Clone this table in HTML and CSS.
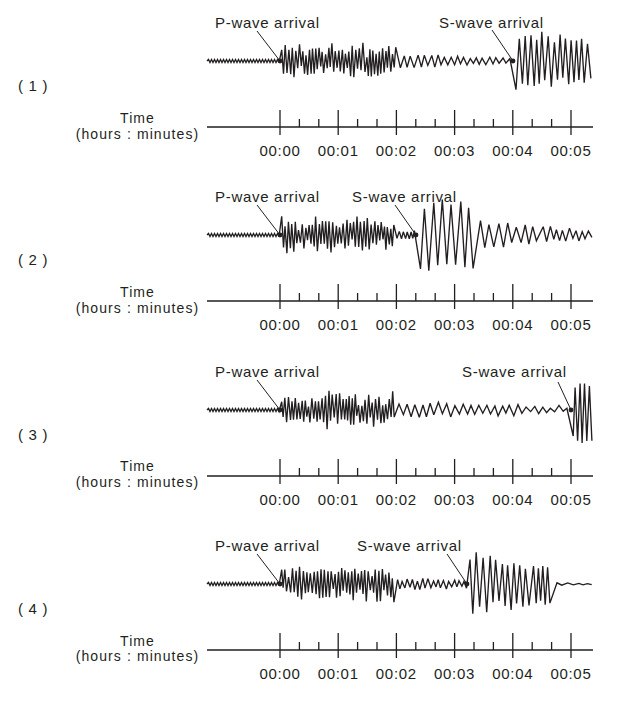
FILE: index.html
```html
<!DOCTYPE html>
<html lang="en">
<head>
<meta charset="utf-8">
<title>Seismograms</title>
<link rel="stylesheet" href="styles.css">
</head>
<body>
<main class="sheet">

  <section class="panel">
    <div class="side">
      <div class="num">( 1 )</div>
      <div class="axis-title"><span>Time</span><span>(hours : minutes)</span></div>
    </div>
    <div class="plot">
      <svg class="chart" width="400" height="142" viewBox="200 0 400 142">
        <path class="trace" data-trace="0" d=""/>
        <line class="leader" x1="257" y1="31" x2="280" y2="61"/>
        <line class="leader" x1="492" y1="30" x2="513" y2="61"/>
        <circle class="dot" cx="280" cy="61" r="2.4"/>
        <circle class="dot" cx="513" cy="61" r="2.4"/>
        <text class="note" x="215" y="27.5">P-wave arrival</text>
        <text class="note" x="439" y="27.5">S-wave arrival</text>
        <path class="axis" d="M207 127H593 M280 110V135 M338.2 110V135 M396.4 110V135 M454.6 110V135 M512.8 110V135 M571 110V135 M299.4 119V127 M318.8 119V127 M357.6 119V127 M377 119V127 M415.8 119V127 M435.2 119V127 M474 119V127 M493.4 119V127 M532.2 119V127 M551.6 119V127"/>
      </svg>
      <div class="ticks"><span>00:00</span><span>00:01</span><span>00:02</span><span>00:03</span><span>00:04</span><span>00:05</span></div>
    </div>
  </section>

  <section class="panel">
    <div class="side">
      <div class="num">( 2 )</div>
      <div class="axis-title"><span>Time</span><span>(hours : minutes)</span></div>
    </div>
    <div class="plot">
      <svg class="chart" width="400" height="142" viewBox="200 0 400 142">
        <path class="trace" data-trace="1" d=""/>
        <line class="leader" x1="257" y1="31" x2="280" y2="61"/>
        <line class="leader" x1="395" y1="31" x2="416" y2="61"/>
        <circle class="dot" cx="280" cy="61" r="2.4"/>
        <circle class="dot" cx="416" cy="61" r="2.4"/>
        <text class="note" x="215" y="27.5">P-wave arrival</text>
        <text class="note" x="352" y="27.5">S-wave arrival</text>
        <path class="axis" d="M207 127H593 M280 110V135 M338.2 110V135 M396.4 110V135 M454.6 110V135 M512.8 110V135 M571 110V135 M299.4 119V127 M318.8 119V127 M357.6 119V127 M377 119V127 M415.8 119V127 M435.2 119V127 M474 119V127 M493.4 119V127 M532.2 119V127 M551.6 119V127"/>
      </svg>
      <div class="ticks"><span>00:00</span><span>00:01</span><span>00:02</span><span>00:03</span><span>00:04</span><span>00:05</span></div>
    </div>
  </section>

  <section class="panel">
    <div class="side">
      <div class="num">( 3 )</div>
      <div class="axis-title"><span>Time</span><span>(hours : minutes)</span></div>
    </div>
    <div class="plot">
      <svg class="chart" width="400" height="142" viewBox="200 0 400 142">
        <path class="trace" data-trace="2" d=""/>
        <line class="leader" x1="257" y1="31" x2="280" y2="61"/>
        <line class="leader" x1="558" y1="33" x2="571" y2="61"/>
        <circle class="dot" cx="280" cy="61" r="2.4"/>
        <circle class="dot" cx="571" cy="61" r="2.4"/>
        <text class="note" x="215" y="27.5">P-wave arrival</text>
        <text class="note" x="462" y="27.5">S-wave arrival</text>
        <path class="axis" d="M207 127H593 M280 110V135 M338.2 110V135 M396.4 110V135 M454.6 110V135 M512.8 110V135 M571 110V135 M299.4 119V127 M318.8 119V127 M357.6 119V127 M377 119V127 M415.8 119V127 M435.2 119V127 M474 119V127 M493.4 119V127 M532.2 119V127 M551.6 119V127"/>
      </svg>
      <div class="ticks"><span>00:00</span><span>00:01</span><span>00:02</span><span>00:03</span><span>00:04</span><span>00:05</span></div>
    </div>
  </section>

  <section class="panel">
    <div class="side">
      <div class="num">( 4 )</div>
      <div class="axis-title"><span>Time</span><span>(hours : minutes)</span></div>
    </div>
    <div class="plot">
      <svg class="chart" width="400" height="142" viewBox="200 0 400 142">
        <path class="trace" data-trace="3" d=""/>
        <line class="leader" x1="257" y1="31" x2="280" y2="61"/>
        <line class="leader" x1="447" y1="31" x2="467" y2="61"/>
        <circle class="dot" cx="280" cy="61" r="2.4"/>
        <circle class="dot" cx="467" cy="61" r="2.4"/>
        <text class="note" x="215" y="27.5">P-wave arrival</text>
        <text class="note" x="357" y="27.5">S-wave arrival</text>
        <path class="axis" d="M207 127H593 M280 110V135 M338.2 110V135 M396.4 110V135 M454.6 110V135 M512.8 110V135 M571 110V135 M299.4 119V127 M318.8 119V127 M357.6 119V127 M377 119V127 M415.8 119V127 M435.2 119V127 M474 119V127 M493.4 119V127 M532.2 119V127 M551.6 119V127"/>
      </svg>
      <div class="ticks"><span>00:00</span><span>00:01</span><span>00:02</span><span>00:03</span><span>00:04</span><span>00:05</span></div>
    </div>
  </section>

</main>
<script src="script.js"></script>
</body>
</html>
```

FILE: styles.css
```css
html, body {
  margin: 0;
  background: #ffffff;
}

body {
  font-family: "Liberation Sans", Arial, sans-serif;
  font-size: 15px;
  letter-spacing: 0.7px;
  color: #231f20;
}

.sheet {
  width: 624px;
}

.panel {
  display: grid;
  grid-template-columns: 200px 400px;
  height: 174.33px;
}

.side {
  display: flex;
  flex-direction: column;
}

.num {
  padding-top: 77px;
  padding-left: 18px;
  line-height: 17px;
}

.axis-title {
  margin-top: 16.8px;
  margin-left: 75px;
  width: 125px;
  display: flex;
  flex-direction: column;
  align-items: center;
  font-size: 14px;
  letter-spacing: 1.1px;
  line-height: 15.7px;
}

.chart {
  display: block;
  overflow: visible;
}

.trace {
  fill: none;
  stroke: #231f20;
  stroke-width: 1.35;
  stroke-linejoin: miter;
  stroke-miterlimit: 3;
}

.leader {
  stroke: #231f20;
  stroke-width: 1;
}

.dot {
  fill: #231f20;
}

.note {
  font-family: "Liberation Sans", Arial, sans-serif;
  font-size: 15px;
  letter-spacing: 0.7px;
  fill: #231f20;
}

.axis {
  fill: none;
  stroke: #231f20;
  stroke-width: 1.3;
}

.ticks {
  display: flex;
  margin-left: 50.9px;
  line-height: 17px;
}

.ticks span {
  flex: none;
  width: 58.2px;
  text-align: center;
}
```

FILE: script.js
```js
(function () {
  function rng(seed) {
    return function () {
      seed |= 0;
      seed = (seed + 0x6D2B79F5) | 0;
      var t = Math.imul(seed ^ (seed >>> 15), 1 | seed);
      t = (t + Math.imul(t ^ (t >>> 7), 61 | t)) ^ t;
      return ((t ^ (t >>> 14)) >>> 0) / 4294967296;
    };
  }

  var CY = 61;
  var TRACES = [
    { seed: 11, segs: [
      { from: 280, to: 397, dx: 1.7, a0: 17, a1: 16, j: 0.65, drift: 3 },
      { from: 397, to: 513, dx: 3.4, a0: 8, a1: 3, j: 0.45, drift: 1 },
      { from: 513, to: 594, dx: 3, a0: 31, a1: 21, j: 0.3, drift: 2.5 }
    ]},
    { seed: 23, segs: [
      { from: 280, to: 395, dx: 1.7, a0: 17, a1: 16, j: 0.65, drift: 3 },
      { from: 395, to: 416, dx: 2, a0: 4, a1: 4, j: 0.3, drift: 0.5 },
      { from: 416, to: 476, dx: 4.5, a0: 38, a1: 34, j: 0.25, drift: 4 },
      { from: 476, to: 540, dx: 4.5, a0: 14, a1: 9, j: 0.4, drift: 2 },
      { from: 540, to: 594, dx: 3.2, a0: 9, a1: 5, j: 0.5, drift: 1.5 }
    ]},
    { seed: 37, segs: [
      { from: 280, to: 395, dx: 1.7, a0: 17, a1: 16, j: 0.65, drift: 3 },
      { from: 395, to: 571, dx: 4, a0: 8, a1: 4, j: 0.45, drift: 1.5 },
      { from: 571, to: 594, dx: 2.2, a0: 34, a1: 30, j: 0.3, drift: 3 }
    ]},
    { seed: 53, segs: [
      { from: 280, to: 395, dx: 1.7, a0: 17, a1: 16, j: 0.65, drift: 3 },
      { from: 395, to: 467, dx: 2.6, a0: 6, a1: 4, j: 0.45, drift: 1 },
      { from: 467, to: 531, dx: 3, a0: 33, a1: 20, j: 0.3, drift: 3 },
      { from: 531, to: 552, dx: 2.5, a0: 22, a1: 20, j: 0.3, drift: 2 },
      { from: 552, to: 594, dx: 5, a0: 1.2, a1: 0.6, j: 0.3, drift: 0.3 }
    ]}
  ];

  function build(spec) {
    var r = rng(spec.seed);
    var d = 'M207 ' + CY;
    var sign = -1;
    var x;
    for (x = 208.5; x <= 280; x += 1.5) {
      d += 'L' + x.toFixed(1) + ' ' + (CY + sign * 1.5).toFixed(1);
      sign = -sign;
    }
    spec.segs.forEach(function (s) {
      var span = s.to - s.from;
      for (x = s.from + s.dx; x <= s.to; x += s.dx * (0.8 + 0.4 * r())) {
        var t = (x - s.from) / span;
        var amp = s.a0 + (s.a1 - s.a0) * t;
        var a = amp * (1 - s.j * r());
        var off = (r() - 0.5) * 2 * s.drift;
        d += 'L' + x.toFixed(1) + ' ' + (CY + sign * a + off).toFixed(1);
        sign = -sign;
      }
    });
    return d;
  }

  var paths = document.querySelectorAll('.trace');
  for (var i = 0; i < paths.length; i++) {
    var idx = parseInt(paths[i].getAttribute('data-trace'), 10);
    paths[i].setAttribute('d', build(TRACES[idx]));
  }
})();
```
